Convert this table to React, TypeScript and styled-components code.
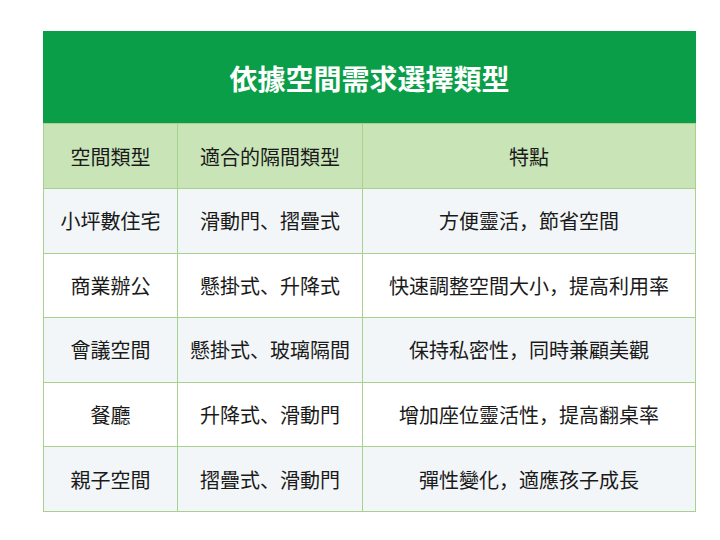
import React from "react";
import styled, { createGlobalStyle } from "styled-components";

const Global = createGlobalStyle`
  html, body { margin: 0; padding: 0; background: #ffffff; }
  body { font-family: "Noto Sans CJK JP", "Noto Sans CJK TC", "Noto Sans", sans-serif; }
`;

const Page = styled.div`
  width: 720px;
  height: 540px;
  padding: 31px 0 0 43px;
  box-sizing: border-box;
`;

const Table = styled.table`
  border-collapse: collapse;
  width: 652px;
  table-layout: fixed;
`;

const TitleCell = styled.th`
  background: #0a9e48;
  color: #ffffff;
  font-size: 28px;
  font-weight: 700;
  height: 92px;
  padding: 0;
  text-align: center;
  border: 1px solid #0a9e48;
  border-bottom: 1px solid #a9d18e;
  box-sizing: border-box;
`;

const HeadCell = styled.th`
  background: #c9e5b8;
  color: #1a1a1a;
  font-size: 20px;
  font-weight: 400;
  height: 64px;
  padding: 0;
  text-align: center;
  border: 1px solid #a9d18e;
`;

const Row = styled.tr<{ $alt: boolean }>`
  background: ${(p) => (p.$alt ? "#f2f6f8" : "#ffffff")};
`;

const Cell = styled.td`
  color: #1a1a1a;
  font-size: 20px;
  height: 63.6px;
  padding: 0;
  text-align: center;
  border: 1px solid #a9d18e;
  white-space: nowrap;
`;

const rows = [
  ["小坪數住宅", "滑動門、摺疊式", "方便靈活，節省空間"],
  ["商業辦公", "懸掛式、升降式", "快速調整空間大小，提高利用率"],
  ["會議空間", "懸掛式、玻璃隔間", "保持私密性，同時兼顧美觀"],
  ["餐廳", "升降式、滑動門", "增加座位靈活性，提高翻桌率"],
  ["親子空間", "摺疊式、滑動門", "彈性變化，適應孩子成長"],
];

export default function App() {
  return (
    <>
      <Global />
      <Page>
        <Table>
          <colgroup>
            <col style={{ width: 134 }} />
            <col style={{ width: 185 }} />
            <col style={{ width: 333 }} />
          </colgroup>
          <thead>
            <tr>
              <TitleCell colSpan={3}>依據空間需求選擇類型</TitleCell>
            </tr>
            <tr>
              <HeadCell>空間類型</HeadCell>
              <HeadCell>適合的隔間類型</HeadCell>
              <HeadCell>特點</HeadCell>
            </tr>
          </thead>
          <tbody>
            {rows.map((r, i) => (
              <Row key={i} $alt={i % 2 === 0}>
                {r.map((c, j) => (
                  <Cell key={j}>{c}</Cell>
                ))}
              </Row>
            ))}
          </tbody>
        </Table>
      </Page>
    </>
  );
}
